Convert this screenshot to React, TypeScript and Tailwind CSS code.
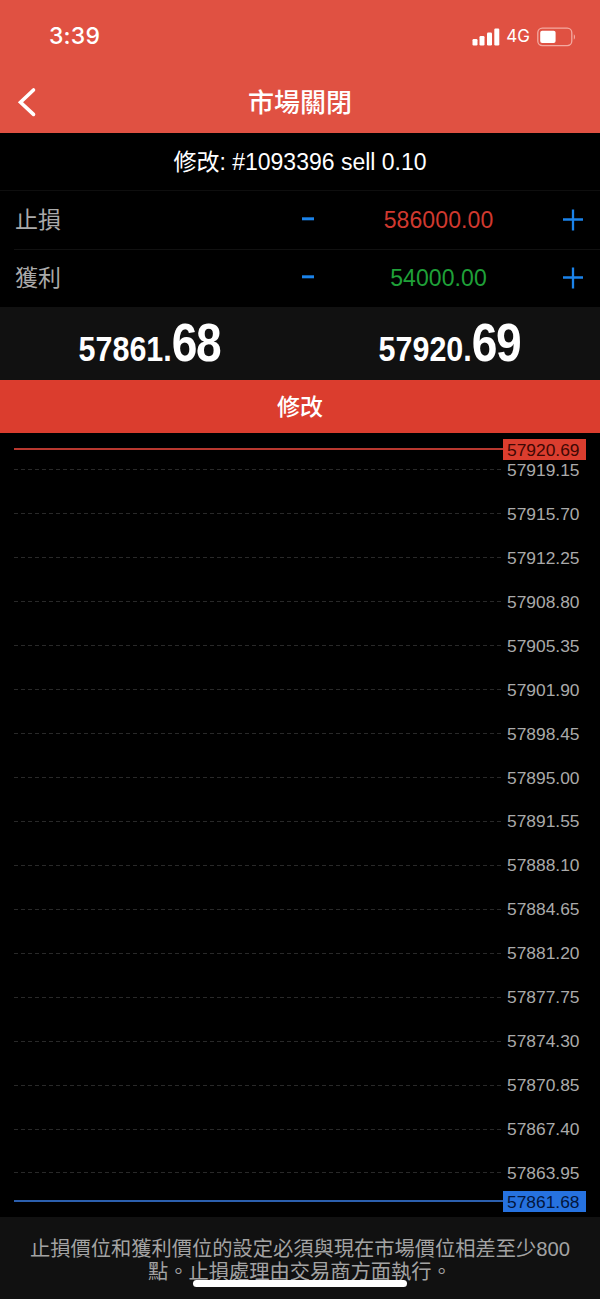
const LEVELS = [
  "57919.15",
  "57915.70",
  "57912.25",
  "57908.80",
  "57905.35",
  "57901.90",
  "57898.45",
  "57895.00",
  "57891.55",
  "57888.10",
  "57884.65",
  "57881.20",
  "57877.75",
  "57874.30",
  "57870.85",
  "57867.40",
  "57863.95",
];

const NOTICE = [
  "止損價位和獲利價位的設定必須與現在市場價位相差至少800",
  "點。止損處理由交易商方面執行。",
];

const StatusBar = () => (
  <div className="flex h-[70px] items-center justify-between pr-[24px] pl-[49px] pt-[3px]">
    <span className="font-['Inter','Liberation_Sans',sans-serif] text-[23px] font-medium tracking-[0.2px]">3:39</span>
    <div className="flex items-center">
      <svg width="28" height="18" viewBox="0 0 28 18" fill="white">
        <rect x="0.5" y="11" width="5" height="6.5" rx="1.2" />
        <rect x="7.5" y="8" width="5" height="9.5" rx="1.2" />
        <rect x="15" y="4.5" width="5" height="13" rx="1.2" />
        <rect x="22.3" y="0.5" width="5" height="17" rx="1.2" />
      </svg>
      <span className="ml-[6px] font-['Inter','Liberation_Sans',sans-serif] text-[17px]">4G</span>
      <svg className="ml-[7px]" width="39" height="20" viewBox="0 0 39 20" fill="none">
        <rect x="0.8" y="1.2" width="34" height="17.4" rx="4.5" stroke="#f3a9a0" strokeWidth="1.3" />
        <rect x="3.2" y="3.8" width="15.4" height="12.2" rx="2" fill="white" />
        <path d="M36.8 7.2c1.6.8 1.6 4.6 0 5.4z" fill="#f3a9a0" />
      </svg>
    </div>
  </div>
);

const StopRow = ({ label, value, color }: { label: string; value: string; color: string }) => (
  <div className="flex flex-1 items-center pr-[16px] pl-[15px] text-[23px]">
    <span className="w-[286px] text-[#aaaaaa]">{label}</span>
    <svg width="14" height="22" viewBox="0 0 14 22">
      <path d="M1 9.8h12" stroke="#1b83ea" strokeWidth="3" />
    </svg>
    <span className={`flex-1 text-center tracking-[0.1px] ${color}`}>{value}</span>
    <svg width="22" height="22" viewBox="0 0 22 22">
      <path d="M1 10.5h20M11 0.5v21" stroke="#1b83ea" strokeWidth="2.3" />
    </svg>
  </div>
);

const Quote = ({ main, pips }: { main: string; pips: string }) => (
  <div className="flex flex-1 items-baseline justify-center pb-[2px] font-bold">
    <div className="flex scale-x-[0.87] items-baseline whitespace-nowrap">
      <span className="text-[35px] leading-none">{main}</span>
      <span className="text-[53px] leading-none tracking-[-1.5px]">{pips}</span>
    </div>
  </div>
);

const PriceLine = ({ price, line, tag }: { price: string; line: string; tag: string }) => (
  <div className="flex h-[21px] items-center pr-[14px] pl-[14px]">
    <div className={`-mt-px h-[2px] flex-1 ${line}`} />
    <div className={`h-[21px] w-[83px] pl-[4px] text-[17.4px] leading-[22px] ${tag}`}>{price}</div>
  </div>
);

export default function App() {
  return (
    <main className="flex h-[1299px] w-[600px] flex-col overflow-hidden bg-black font-['Liberation_Sans','Noto_Sans_CJK_TC',sans-serif] text-white">
      <header className="h-[133px] bg-[#e05142]">
        <StatusBar />
        <div className="grid h-[63px] grid-cols-[60px_1fr_60px] items-center">
          <svg className="ml-[17px]" width="20" height="30" viewBox="0 0 20 30" fill="none">
            <path d="M16.5 3L3.5 15.2L16.5 27.4" stroke="white" strokeWidth="3.6" strokeLinecap="round" />
          </svg>
          <h1 className="pt-[2px] text-center text-[26px] leading-none font-medium">市場關閉</h1>
        </div>
      </header>

      <div className="flex h-[58px] items-center justify-center border-b border-[#0e0e0e] pt-[2px] text-[23px]">
        修改: #1093396 sell 0.10
      </div>
      <div className="flex h-[116px] flex-col">
        <StopRow label="止損" value="586000.00" color="text-[#d0392f]" />
        <div className="ml-[14px] h-px bg-[#111111]" />
        <StopRow label="獲利" value="54000.00" color="text-[#1fa038]" />
      </div>

      <div className="flex h-[73px] items-center bg-[#111111]">
        <Quote main="57861." pips="68" />
        <Quote main="57920." pips="69" />
      </div>
      <button className="h-[53px] bg-[#db3d2e] pt-[2px] text-[23px] font-medium">修改</button>

      <section className="flex h-[784px] flex-col pt-[6px]">
        <PriceLine price="57920.69" line="bg-[#b9382f]" tag="bg-[#db3d2e] text-[#3f0804]" />
        {/* the grid runs slightly under the bid/ask lines at both ends */}
        <div className="-mt-[12px] -mb-[4px] flex flex-1 flex-col">
          {LEVELS.map((level) => (
            <div key={level} className="flex flex-1 items-center pr-[14px] pl-[14px]">
              <div className="h-px flex-1 bg-[repeating-linear-gradient(90deg,#292929_0_4px,transparent_4px_7px)]" />
              <span className="w-[83px] pl-[4px] text-[17.4px] leading-[22px] text-[#aaaaaa]">{level}</span>
            </div>
          ))}
        </div>
        <PriceLine price="57861.68" line="bg-[#2b5fae]" tag="bg-[#2672e0] text-[#03163d]" />
        <div className="h-[5px]" />
      </section>

      <footer className="relative flex-1 bg-[#111111] pt-[21px] text-center text-[20.25px] leading-[23px] whitespace-nowrap text-[#a3a3a3]">
        {NOTICE.map((text) => (
          <p key={text}>{text}</p>
        ))}
        <div className="absolute bottom-[12px] left-[193px] h-[7px] w-[214px] rounded-full bg-white" />
      </footer>
    </main>
  );
}
